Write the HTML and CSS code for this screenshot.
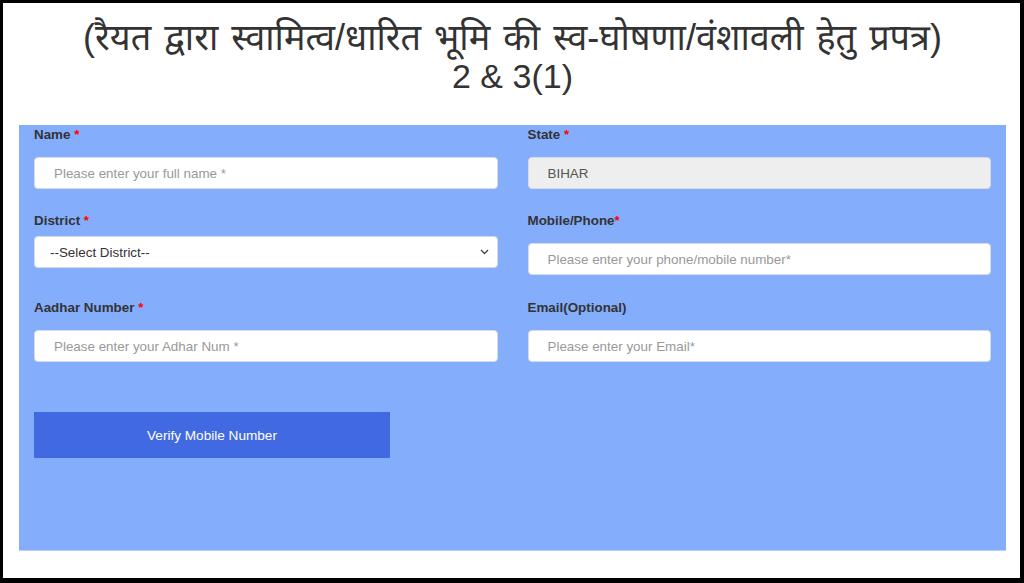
FILE: index.html
```html
<!DOCTYPE html>
<html lang="hi">
<head>
<meta charset="utf-8">
<title>प्रपत्र 2 &amp; 3(1)</title>
<link rel="stylesheet" href="styles.css">
</head>
<body>
<div class="frame">
  <h1 class="title"><span class="title-hi">(रैयत द्वारा स्वामित्व/धारित भूमि की स्व-घोषणा/वंशावली हेतु प्रपत्र)</span><br><span class="title-num">2 &amp; 3(1)</span></h1>
  <form class="panel">
    <div class="row">
      <div class="field">
        <label class="label">Name <span class="req">*</span></label>
        <input class="input" type="text" placeholder="Please enter your full name *">
      </div>
      <div class="field">
        <label class="label">State <span class="req">*</span></label>
        <input class="input input-readonly" type="text" value="BIHAR" readonly>
      </div>
    </div>
    <div class="row row-mid">
      <div class="field">
        <label class="label label-tight">District <span class="req">*</span></label>
        <div class="select">
          <span class="select-text">--Select District--</span>
          <svg class="chevron" width="9" height="6" viewBox="0 0 9 6"><path d="M1 1 L4.5 4.5 L8 1" fill="none" stroke="#444" stroke-width="1.3"/></svg>
        </div>
      </div>
      <div class="field">
        <label class="label">Mobile/Phone<span class="req">*</span></label>
        <input class="input" type="text" placeholder="Please enter your phone/mobile number*">
      </div>
    </div>
    <div class="row">
      <div class="field">
        <label class="label">Aadhar Number <span class="req">*</span></label>
        <input class="input" type="text" placeholder="Please enter your Adhar Num *">
      </div>
      <div class="field">
        <label class="label">Email(Optional)</label>
        <input class="input" type="text" placeholder="Please enter your Email*">
      </div>
    </div>
    <div class="actions">
      <button class="btn" type="button">Verify Mobile Number</button>
    </div>
  </form>
</div>
</body>
</html>
```

FILE: styles.css
```css
* { box-sizing: border-box; }
html, body { margin: 0; padding: 0; background: #000; }
body { font-family: "Liberation Sans", Arial, "Noto Sans Devanagari", "Noto Sans", sans-serif; }

.frame {
  width: 1024px;
  height: 583px;
  background: #fff;
  border-style: solid;
  border-color: #000;
  border-width: 3px 4px 5px 3px;
  padding: 0 14px 0 16px;
  overflow: hidden;
}

.title {
  margin: 0;
  padding-top: 16px;
  height: 122px;
  text-align: center;
  font-weight: normal;
  font-size: 34px;
  line-height: 38px;
  color: #333;
}
.title-hi {
  font-size: 36px;
  word-spacing: 3px;
}
.title-num { font-size: 34px; }

.panel {
  margin: 0;
  height: 426px;
  background: #84adfc;
  border-bottom: 1px solid #b9cffa;
  padding: 0 15px;
}

.row {
  display: grid;
  grid-template-columns: 1fr 1fr;
  column-gap: 30px;
}

.field {
  display: flex;
  flex-direction: column;
  padding-bottom: 22px;
}
.row-mid .field { padding-bottom: 23px; }

.label {
  display: block;
  height: 18px;
  padding-top: 1px;
  line-height: 18px;
  font-size: 13.4px;
  font-weight: bold;
  color: #333;
  margin-bottom: 14px;
}
.label-tight { margin-bottom: 7px; }

.req { color: #f00; }

.input {
  height: 32px;
  width: 100%;
  border: 1px solid #d6dbe3;
  border-radius: 4px;
  background: #fff;
  padding: 0 19px;
  font-family: "Liberation Sans", Arial, sans-serif;
  font-size: 13.4px;
  color: #555;
  outline: none;
}
.input::placeholder { color: #999; }
.input-readonly { background: #eee; color: #555; }

.select {
  height: 32px;
  border: 1px solid #d6dbe3;
  border-radius: 4px;
  background: #fff;
  padding: 0 8px 0 15px;
  display: flex;
  align-items: center;
  justify-content: space-between;
  font-size: 13.4px;
  color: #333;
}

.actions { padding-top: 28px; }

.btn {
  width: 356px;
  height: 46px;
  background: #4169e1;
  border: none;
  color: #fff;
  font-family: "Liberation Sans", Arial, sans-serif;
  font-size: 13.6px;
  padding: 0;
}
```
